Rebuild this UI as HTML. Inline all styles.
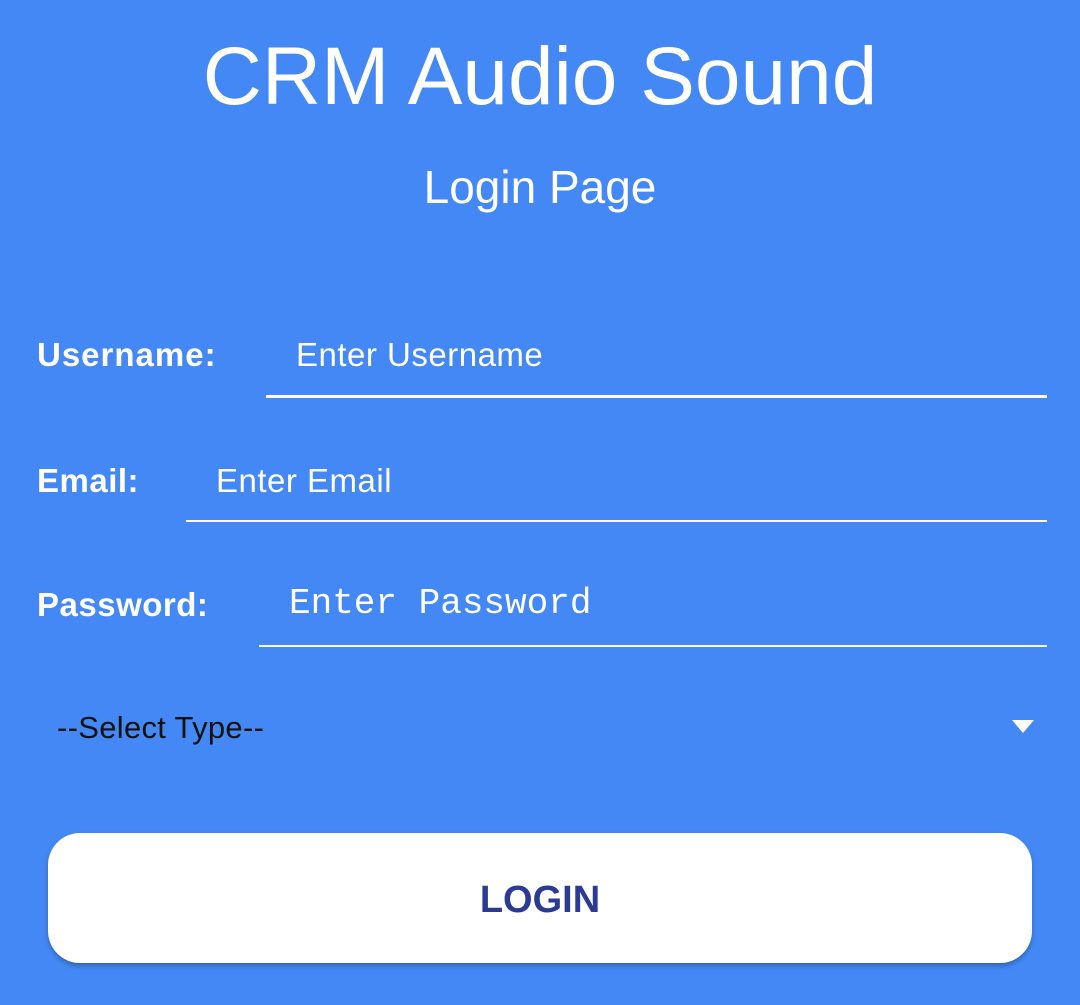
<!DOCTYPE html>
<html><head><style>
body{margin:0;width:1080px;height:1005px;background:#4388f4;font-family:"Liberation Sans",sans-serif;color:#fff;position:relative;overflow:hidden}
.a{position:absolute;white-space:nowrap}
.line{position:absolute;height:3px;background:#fff}
</style></head><body>
<div class="a" style="left:0;width:1080px;text-align:center;top:32px;font-size:82px;line-height:90px">CRM Audio Sound</div>
<div class="a" style="left:0;width:1080px;text-align:center;top:159px;font-size:46px;line-height:56px">Login Page</div>
<div class="a" style="left:37px;top:335px;font-size:33px;font-weight:bold;line-height:40px;letter-spacing:1px">Username:</div>
<div class="a" style="left:296px;top:335px;font-size:33px;line-height:40px;letter-spacing:0.5px">Enter Username</div>
<div class="line" style="left:266px;width:781px;top:395px"></div>
<div class="a" style="left:37px;top:461px;font-size:33px;font-weight:bold;line-height:40px;letter-spacing:0.5px">Email:</div>
<div class="a" style="left:216px;top:461px;font-size:33px;line-height:40px;letter-spacing:0.5px">Enter Email</div>
<div class="line" style="left:186px;width:861px;top:520px;height:2px"></div>
<div class="a" style="left:37px;top:585px;font-size:33px;font-weight:bold;line-height:40px;letter-spacing:0.5px">Password:</div>
<div class="a" style="left:289px;top:584px;font-size:36px;line-height:40px;font-family:'Liberation Mono',monospace">Enter Password</div>
<div class="line" style="left:259px;width:788px;top:645px;height:2px"></div>
<div class="a" style="left:57px;top:709px;font-size:31px;line-height:38px;color:#111;letter-spacing:0.3px">--Select Type--</div>
<div class="a" style="left:1012px;top:720px;width:0;height:0;border-left:11px solid transparent;border-right:11px solid transparent;border-top:13px solid #fff"></div>
<div class="a" style="left:48px;top:833px;width:984px;height:130px;background:#fff;border-radius:32px;box-shadow:0 3px 5px rgba(0,0,0,.25);text-align:center;line-height:134px;font-size:38px;font-weight:bold;color:#2b3a93">LOGIN</div>
</body></html>
